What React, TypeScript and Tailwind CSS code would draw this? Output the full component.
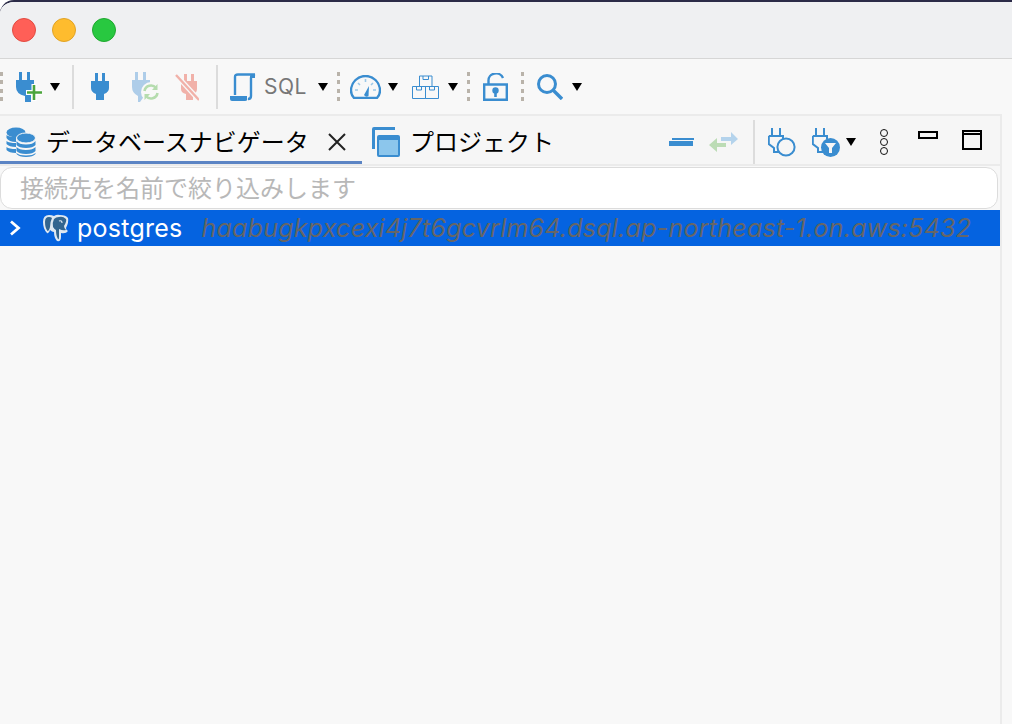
import React from 'react';

const jp = "font-['Inter','Noto_Sans_CJK_JP',sans-serif]";

const Caret = ({ className = '' }: { className?: string }) => (
  <svg viewBox="0 0 10 8" className={`h-[8px] w-[10px] shrink-0 ${className}`}>
    <path d="M0 0H10L5 8Z" fill="#000" />
  </svg>
);

const Grip = ({ className = '' }: { className?: string }) => (
  <div className={`flex h-[30px] w-[3px] shrink-0 flex-col justify-between ${className}`}>
    <div className="h-[4px] w-[3px] bg-[#b9b3aa]" />
    <div className="h-[4px] w-[3px] bg-[#b9b3aa]" />
    <div className="h-[4px] w-[3px] bg-[#b9b3aa]" />
    <div className="h-[4px] w-[3px] bg-[#b9b3aa]" />
  </div>
);

const Sep = ({ className = '' }: { className?: string }) => (
  <div className={`h-[44px] w-[2px] shrink-0 bg-[#dcdcdc] ${className}`} />
);

const PLUG = 'M4 0H7V8H11V0H14V8H18V15Q18 19 13 21V27H5V21Q0 19 0 15V8H4Z';

const PlugAdd = ({ className = '' }: { className?: string }) => (
  <svg viewBox="0 0 28 30" className={`h-[30px] w-[28px] shrink-0 ${className}`}>
    <path d="M4 0H7V8H12V0H15V8H19V16Q19 18 16 20V30H10V24Q1 22 1 15V8H4Z" fill="#3a8dd0" />
    <path d="M19 12V29M11 20.5H27" stroke="#fff" strokeWidth="5" />
    <path d="M19 13V28M12 20.5H27" stroke="#4ba53c" strokeWidth="2.6" />
  </svg>
);

const PlugIcon = ({ className = '' }: { className?: string }) => (
  <svg viewBox="0 0 18 27" className={`h-[27px] w-[18px] shrink-0 ${className}`}>
    <path d={PLUG} fill="#3a8dd0" />
  </svg>
);

const PlugRefresh = ({ className = '' }: { className?: string }) => (
  <svg viewBox="0 0 29 30" className={`h-[30px] w-[29px] shrink-0 ${className}`}>
    <path d="M4 0H7V8H12V0H15V8H19V16L9 30H7V24Q1 21 1 15V8H4Z" fill="#aecde9" />
    <circle cx="20" cy="20" r="10" fill="#f8f8f8" />
    <path d="M13.5 19A6.5 6.5 0 0 1 25 16M26.5 21A6.5 6.5 0 0 1 15 24" fill="none" stroke="#b5dcae" strokeWidth="2.6" />
    <path d="M26.5 12V18H21ZM13.5 28V22H19Z" fill="#b5dcae" />
  </svg>
);

const PlugOff = ({ className = '' }: { className?: string }) => (
  <svg viewBox="0 0 24 28" className={`h-[28px] w-[24px] shrink-0 ${className}`}>
    <path d="M9 1H12V8H16V1H19V8H22V16Q22 20 18 21V27H11V21Q6 20 6 16V8H9Z" fill="#f1b1a9" />
    <path d="M1 2L24 27" stroke="#f8f8f8" strokeWidth="5" />
    <path d="M1 2L24 27" stroke="#f1b1a9" strokeWidth="2.4" />
  </svg>
);

const Script = ({ className = '' }: { className?: string }) => (
  <svg viewBox="0 0 26 28" className={`h-[28px] w-[26px] shrink-0 ${className}`}>
    <path d="M5 22V4Q5 1.5 8 1.5H25Q21 2 21 5V23Q21 26 18 26" fill="none" stroke="#3a8dd0" strokeWidth="2.4" />
    <path d="M0 23H17V25Q18 28 15 28H2Q0 28 0 26Z" fill="#3a8dd0" />
    <path d="M21 1H25V5H21Z" fill="#3a8dd0" />
  </svg>
);

const Gauge = ({ className = '' }: { className?: string }) => (
  <svg viewBox="0 0 31 24" className={`h-[24px] w-[31px] shrink-0 ${className}`}>
    <path d="M4 23Q1 20 1 15.5A14.5 14.5 0 0 1 30 15.5Q30 20 27 23Z" fill="none" stroke="#3a8dd0" strokeWidth="2.4" />
    <path d="M14 20L19 11L18.5 21Q16 23 14 20Z" fill="#3a8dd0" />
    <path d="M5 15H8M8 8L10 10M15.5 4V7M23 8L21 10M23 15H26" stroke="#9cc8e8" strokeWidth="1.6" />
  </svg>
);

const Boxes = ({ className = '' }: { className?: string }) => (
  <svg viewBox="0 0 27 24" className={`h-[24px] w-[27px] shrink-0 ${className}`}>
    <path d="M7.5 1H20V11.5H7.5ZM.5 11.5H13.5V23.5H.5ZM13.5 11.5H26.5V23.5H13.5Z" fill="none" stroke="#3a8dd0" strokeWidth="1" />
    <path d="M11 1V4.5H16.5V1M4.5 11.5V15H9.5V11.5M17.5 11.5V15H22.5V11.5" fill="none" stroke="#3a8dd0" strokeWidth="1" />
  </svg>
);

const Lock = ({ className = '' }: { className?: string }) => (
  <svg viewBox="0 0 25 28" className={`h-[28px] w-[25px] shrink-0 ${className}`}>
    <path d="M1.2 11.5H23.8V26.8H1.2Z" fill="none" stroke="#3a8dd0" strokeWidth="2.4" />
    <path d="M5.5 11V8A7.5 7 0 0 1 20 5" fill="none" stroke="#3a8dd0" strokeWidth="2.4" />
    <circle cx="12.5" cy="17.5" r="3.2" fill="#3a8dd0" />
    <path d="M11.2 18H13.8V24H11.2Z" fill="#3a8dd0" />
  </svg>
);

const Search = ({ className = '' }: { className?: string }) => (
  <svg viewBox="0 0 26 26" className={`h-[26px] w-[26px] shrink-0 ${className}`}>
    <circle cx="10" cy="10" r="8.5" fill="none" stroke="#3a8dd0" strokeWidth="3" />
    <path d="M16 16L25 25" stroke="#3a8dd0" strokeWidth="3.4" />
  </svg>
);

const DbStack = ({ className = '' }: { className?: string }) => (
  <svg viewBox="0 0 30 30" className={`h-[30px] w-[30px] shrink-0 ${className}`}>
    <ellipse cx="10" cy="5.5" rx="9.5" ry="5" fill="#3a8dd0" />
    <path d="M.5 8V11Q3 15 10 15V10Q3 10 .5 8ZM.5 14V17Q3 20 10 20V16Q3 16 .5 14ZM.5 20V23Q3 26 10 26V22Q3 22 .5 20Z" fill="#3a8dd0" />
    <ellipse cx="20" cy="11" rx="9.5" ry="5" fill="#3a8dd0" stroke="#f6f6f6" />
    <path d="M10.5 14V18Q13 21 20 21T29.5 18V14Q27 17.5 20 17.5T10.5 14ZM10.5 20V24Q13 27 20 27T29.5 24V20Q27 23 20 23T10.5 20Z" fill="#3a8dd0" />
    <path d="M10.5 26V27Q13 30 20 30T29.5 27V26Q27 28.5 20 28.5T10.5 26Z" fill="#3a8dd0" />
  </svg>
);

const Windows = ({ className = '' }: { className?: string }) => (
  <svg viewBox="0 0 28 30" className={`h-[30px] w-[28px] shrink-0 ${className}`}>
    <path d="M2 0H23V3H3V22H0V2Q0 0 2 0Z" fill="#3a8dd0" />
    <rect x="5" y="8" width="23" height="22" rx="2" fill="#3a8dd0" />
    <rect x="7" y="13" width="19" height="15" fill="#8cc6ec" />
  </svg>
);

const MinBars = ({ className = '' }: { className?: string }) => (
  <svg viewBox="0 0 25 9" className={`h-[9px] w-[25px] shrink-0 ${className}`}>
    <path d="M3 0H25V2H3Z" fill="#3a8dd0" />
    <path d="M0 3H24V8H0Z" fill="#3a8dd0" />
  </svg>
);

const Arrows = ({ className = '' }: { className?: string }) => (
  <svg viewBox="0 0 29 20" className={`h-[20px] w-[29px] shrink-0 ${className}`}>
    <path d="M12 5H22V0L29 7L22 13V9H12Z" fill="#b4d3ec" />
    <path d="M17 11H8V6L0 13L8 20V15H17Z" fill="#bcdcb5" />
  </svg>
);

const PlugOutline = () => (
  <path d="M4 0V8M12 0V8M0.8 8H15V11M0.8 8V16L6 20V24H11" fill="none" stroke="#3a8dd0" strokeWidth="2" />
);

const PlugCircle = ({ className = '' }: { className?: string }) => (
  <svg viewBox="0 0 28 29" className={`h-[29px] w-[28px] shrink-0 ${className}`}>
    <PlugOutline />
    <circle cx="18" cy="19" r="8.6" fill="#f6f6f6" stroke="#3a8dd0" strokeWidth="2" />
  </svg>
);

const PlugFilter = ({ className = '' }: { className?: string }) => (
  <svg viewBox="0 0 28 29" className={`h-[29px] w-[28px] shrink-0 ${className}`}>
    <PlugOutline />
    <circle cx="18.5" cy="19.5" r="9.5" fill="#3a8dd0" />
    <path d="M13 15H24L20 20V25H17V20Z" fill="#f6f6f6" />
  </svg>
);

const Elephant = ({ className = '' }: { className?: string }) => (
  <svg viewBox="0 0 28 28" className={`h-[28px] w-[28px] shrink-0 ${className}`}>
    <path d="M7 1Q1 1 1 8Q1 15 5 19Q7 20 8 16Q10 18 12 18Q12 24 15 27Q19 28 19 23V19Q24 20 26 17Q24 16 24 14Q27 8 26 4Q24 1 18 1Q15 0 12 2Q10 1 7 1Z" fill="#dfe8f1" />
    <path d="M7 3Q3 3 3 8Q3 14 5.5 17Q7 17 8 13Q8 8 10 4Q9 3 7 3Z" fill="#33658f" />
    <path d="M12 5Q10 9 11 13Q13 16 14 16Q14 22 16 25Q17 26 17 23V15Q21 17 24 16Q22 14 22 12Q25 7 24 5Q21 2 17 3Q14 3 12 5Z" fill="#33658f" />
    <path d="M17 7Q20 6 20 9" fill="none" stroke="#dfe8f1" strokeWidth="1.2" />
  </svg>
);

export default function App() {
  return (
    <div className={`h-[724px] w-[1012px] overflow-hidden bg-white ${jp}`}>
      <div className="flex h-full flex-col overflow-hidden rounded-tl-[14px] border-t-2 border-[#2b2b48] bg-[#f8f8f8]">
        {/* title bar */}
        <div className="flex h-[57px] shrink-0 items-center gap-[16px] border-b border-[#d6d6d6] bg-[#eff0f2] pl-[12px] pb-[1px]">
          <div className="h-[24px] w-[24px] rounded-full border border-[#e24b41] bg-[#ff5f57]" />
          <div className="h-[24px] w-[24px] rounded-full border border-[#e1a325] bg-[#febc2e]" />
          <div className="h-[24px] w-[24px] rounded-full border border-[#1fa82f] bg-[#28c840]" />
        </div>

        {/* main toolbar */}
        <div className="flex h-[55px] shrink-0 items-center bg-[#f8f8f8]">
          <Grip />
          <PlugAdd className="ml-[12px]" />
          <Caret className="ml-[7px]" />
          <Sep className="ml-[12px]" />
          <PlugIcon className="ml-[17px]" />
          <PlugRefresh className="ml-[22px]" />
          <PlugOff className="ml-[15px]" />
          <Sep className="ml-[17px]" />
          <Script className="ml-[12px]" />
          <span className="ml-[8px] w-[43px] shrink-0 text-[21px] tracking-[0.5px] whitespace-nowrap text-[#777]">SQL</span>
          <Caret className="ml-[11px]" />
          <Grip className="ml-[9px]" />
          <Gauge className="ml-[10px]" />
          <Caret className="ml-[7px]" />
          <Boxes className="ml-[14px]" />
          <Caret className="ml-[9px]" />
          <Grip className="ml-[9px]" />
          <Lock className="ml-[13px]" />
          <Grip className="ml-[13px]" />
          <Search className="ml-[13px]" />
          <Caret className="ml-[9px]" />
        </div>

        <div className="flex min-h-0 flex-1">
          <div className="flex w-[1000px] shrink-0 flex-col">
            {/* view tabs */}
            <div className="flex h-[52px] shrink-0 items-center border-y-2 border-[#ebebeb] bg-[#f6f6f6]">
              <div className="flex h-full w-[362px] shrink-0 items-center border-b-[3px] border-[#5b84c4] pt-[6px]">
                <DbStack className="ml-[6px]" />
                <span className="mt-[2px] ml-[10px] w-[261px] shrink-0 text-[24px] leading-none whitespace-nowrap text-black">データベースナビゲータ</span>
                <svg viewBox="0 0 20 20" className="ml-[20px] h-[20px] w-[20px] shrink-0">
                  <path d="M2 2L18 18M18 2L2 18" stroke="#222" strokeWidth="2" />
                </svg>
              </div>
              <div className="flex h-full flex-1 items-center pt-[4px]">
                <Windows className="ml-[10px]" />
                <span className="mt-[2px] ml-[10px] w-[140px] shrink-0 text-[24px] leading-none whitespace-nowrap text-black">プロジェクト</span>
                <MinBars className="ml-[119px]" />
                <Arrows className="ml-[15px]" />
                <div className="ml-[15px] h-[44px] w-[2px] shrink-0 bg-[#dcdcdc]" />
                <PlugCircle className="ml-[13px]" />
                <PlugFilter className="ml-[16px]" />
                <Caret className="ml-[6px]" />
                <div className="ml-[24px] flex w-[8px] shrink-0 flex-col gap-[1px]">
                  <div className="h-[8px] w-[8px] rounded-full border border-[#111]" />
                  <div className="h-[8px] w-[8px] rounded-full border border-[#111]" />
                  <div className="h-[8px] w-[8px] rounded-full border border-[#111]" />
                </div>
                <div className="mb-[14px] ml-[30px] h-[8px] w-[20px] shrink-0 border-2 border-black" />
                <div className="mb-[5px] ml-[24px] h-[20px] w-[20px] shrink-0 border-2 border-black">
                  <div className="h-[3px] border-b-2 border-black" />
                </div>
              </div>
            </div>

            {/* filter box */}
            <div className="h-[44px] shrink-0 pt-[1px] pr-[2px]">
              <div className="flex h-[42px] items-center rounded-[12px] border border-[#dcdcdc] bg-white pt-[2px] pl-[19px] text-[24px] whitespace-nowrap text-[#b8b8b8]">
                接続先を名前で絞り込みします
              </div>
            </div>

            {/* tree */}
            <div className="flex h-[36px] shrink-0 items-center bg-[#0563e0]">
              <svg viewBox="0 0 12 16" className="ml-[9px] h-[16px] w-[12px] shrink-0">
                <path d="M2 1.5L9.5 8L2 14.5" fill="none" stroke="#fff" strokeWidth="2.8" />
              </svg>
              <Elephant className="ml-[21px]" />
              <span className="ml-[7px] text-[25px] leading-none tracking-[0.24px] text-white">postgres</span>
              <span className="ml-[19px] text-[25px] leading-none tracking-[0.24px] whitespace-nowrap text-[#666] italic">haabugkpxcexi4j7t6gcvrlm64.dsql.ap-northeast-1.on.aws:5432</span>
            </div>
          </div>
          <div className="flex-1 border-l-2 border-[#ebebeb] bg-[#f8f8f8]" />
        </div>
      </div>
    </div>
  );
}
